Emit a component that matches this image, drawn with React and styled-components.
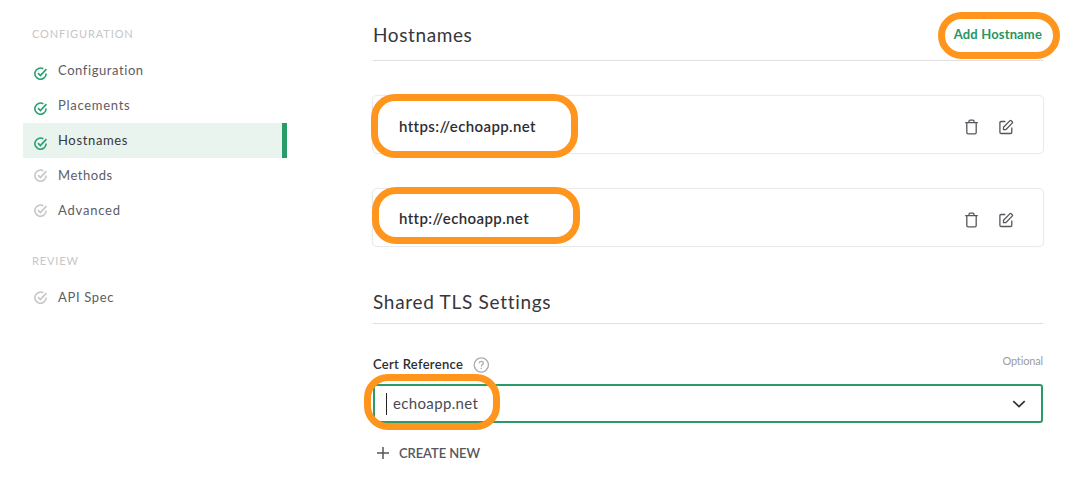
import React from "react";
import styled, { createGlobalStyle } from "styled-components";

const GlobalStyle = createGlobalStyle`
  *, *::before, *::after { box-sizing: border-box; }
  body { margin: 0; background: #fff; font-family: Lato, "Liberation Sans", sans-serif; font-variant-ligatures: none; color: #2c2c33; }
  h2, p, ul { margin: 0; padding: 0; font-weight: 400; }
  button { border: 0; padding: 0; background: none; font-family: inherit; }
`;

const Page = styled.div`
  display: flex;
  width: 1076px;
  height: 493px;
  overflow: hidden;
`;

const Sidebar = styled.nav`
  width: 264px;
  margin-left: 23px;
  padding-top: 27px;
`;

const GroupTitle = styled.p`
  height: 14px;
  margin: ${(p) => p.$margin};
  padding-left: 9px;
  font-size: 11px;
  line-height: 14px;
  letter-spacing: 0.88px;
  color: #c6c6c9;
`;

const NavItem = styled.div`
  display: flex;
  align-items: center;
  height: 35px;
  padding-left: 11px;
  border-right: 5px solid ${(p) => (p.$active ? "#289d68" : "transparent")};
  background: ${(p) => (p.$active ? "#e9f4ee" : "transparent")};
  color: ${(p) => (p.$active ? "#36363d" : "#5d5d64")};
  font-size: 13px;
  line-height: 16px;
  letter-spacing: ${(p) => p.$spacing || 0.65}px;

  svg {
    margin-right: 11px;
    margin-top: ${(p) => (p.$done ? 7 : 0)}px;
    color: ${(p) => (p.$done ? "#279f70" : "#c6c6c8")};
  }
`;

const NavLabel = styled.span`
  padding-bottom: 2px;
`;

const Main = styled.main`
  display: flex;
  flex-direction: column;
  width: 670px;
  margin-left: 86px;
`;

const SectionHeader = styled.header`
  display: flex;
  justify-content: space-between;
  align-items: center;
  height: ${(p) => p.$height}px;
  padding-top: ${(p) => p.$top}px;
  border-bottom: 1px solid #dfdfe1;
`;

const Heading = styled.h2`
  font-size: 19px;
  line-height: 24px;
  letter-spacing: ${(p) => p.$spacing}px;
  color: #36363c;
`;

const AddButton = styled.button`
  margin: -2px 1px 0 0;
  font-size: 13px;
  line-height: 18px;
  font-weight: 700;
  letter-spacing: 0.15px;
  color: #289563;
`;

const Cards = styled.div`
  display: flex;
  flex-direction: column;
  gap: 34px;
  margin: 34px -1px 0;
`;

const Card = styled.div`
  display: flex;
  align-items: center;
  height: 59px;
  padding: 4px 29px 0 26px;
  border: 1px solid #e9eaec;
  border-radius: 5px;
  box-shadow: 0 0 2px rgba(60, 60, 80, 0.06);
`;

const Host = styled.span`
  flex: 1;
  padding-bottom: ${(p) => p.$lift}px;
  font-size: 15px;
  line-height: 20px;
  font-weight: 600;
  letter-spacing: 0.38px;
  color: #2d2d33;
`;

const Actions = styled.div`
  display: flex;
  gap: 19px;
  color: #56565d;
  svg { display: block; }
`;

const FieldLabel = styled.div`
  display: flex;
  align-items: center;
  height: 18px;
  margin-top: 32px;
`;

const LabelText = styled.span`
  padding-bottom: 2px;
  font-size: 13px;
  font-weight: 600;
  letter-spacing: 0.3px;
  color: #2d2d33;
`;

const HelpIcon = styled.svg`
  margin-left: 10px;
`;

const Optional = styled.span`
  margin: -9px 0 0 auto;
  font-size: 11px;
  letter-spacing: -0.15px;
  color: #9c9ca1;
`;

const SelectBox = styled.div`
  display: flex;
  align-items: center;
  height: 39px;
  margin-top: 10px;
  padding: 0 15px 0 11px;
  border: 2px solid #2b9c68;
  border-radius: 3px;
  color: #4a4a51;
`;

const SelectValue = styled.span`
  padding-bottom: 2px;
  font-size: 15px;
  letter-spacing: 0.35px;
`;

const Caret = styled.i`
  width: 1px;
  height: 22px;
  margin-right: 6px;
  background: #222;
`;

const Chevron = styled.svg`
  margin-left: auto;
`;

const CreateButton = styled.button`
  display: flex;
  align-items: center;
  gap: 10px;
  height: 18px;
  margin: 21px 0 0 4px;
  font-size: 13px;
  font-weight: 600;
  letter-spacing: -0.1px;
  color: #56565c;
`;

/* Orange marker drawn over the content it highlights. */
const Marker = styled.div`
  position: absolute;
  left: ${(p) => p.$x}px;
  top: ${(p) => p.$y}px;
  width: ${(p) => p.$w}px;
  height: ${(p) => p.$h}px;
  border: 7px solid #ff951d;
  border-radius: 24px;
  pointer-events: none;
`;

const CheckIcon = () => (
  <svg width="13" height="14" viewBox="0 0 13 14" fill="none" stroke="currentColor" strokeWidth="1.6">
    <path d="M9.3 1.8A5.6 5.6 0 1 0 12.1 6.6" />
    <path d="M4 6.1 6.4 8.6 12.4 2.1" />
  </svg>
);

const TrashIcon = () => (
  <svg width="15" height="16" viewBox="0 0 15 16" fill="none" stroke="currentColor" strokeWidth="1.3">
    <path d="M1.2 3.7h12.6M5 3.5V2.2Q5 1.2 6 1.2h3q1 0 1 1v1.3M2.8 3.9v9.6q0 1.3 1.3 1.3h6.8q1.3 0 1.3-1.3V3.9" />
  </svg>
);

const EditIcon = () => (
  <svg width="16" height="16" viewBox="0 0 16 16" fill="none" stroke="currentColor" strokeWidth="1.3" strokeLinejoin="round">
    <path d="M7.3 2.5H3.2Q1.9 2.5 1.9 3.8v9.4q0 1.3 1.3 1.3h9.3q1.3 0 1.3-1.3V8.6" />
    <path d="M5.5 10.7V8.2L12 1.6q.5-.5 1 0l1.4 1.3q.5.5 0 1L8 10.5Z" />
  </svg>
);

const NAV = [
  { label: "Configuration", done: true, spacing: 0.58 },
  { label: "Placements", done: true, spacing: 0.72 },
  { label: "Hostnames", done: true, active: true },
  { label: "Methods", spacing: 0.55 },
  { label: "Advanced", spacing: 0.8 },
];

const HOSTS = [
  { url: "https://echoapp.net", lift: 2 },
  { url: "http://echoapp.net", lift: 4 },
];

const MARKERS = [
  [938, 11.5, 122, 47],
  [370.5, 94.3, 207, 64],
  [371.6, 187.3, 208.4, 57],
  [363.6, 374.3, 136.9, 55.3],
];

export default function App() {
  return (
    <>
      <GlobalStyle />
      <Page>
        <Sidebar>
          <GroupTitle $margin="0 0 12px">CONFIGURATION</GroupTitle>
          {NAV.map((n) => (
            <NavItem key={n.label} $done={n.done} $active={n.active} $spacing={n.spacing}>
              <CheckIcon />
              <NavLabel>{n.label}</NavLabel>
            </NavItem>
          ))}
          <GroupTitle $margin="26px 0 12px">REVIEW</GroupTitle>
          <NavItem>
            <CheckIcon />
            <NavLabel>API Spec</NavLabel>
          </NavItem>
        </Sidebar>
        <Main>
          <SectionHeader $height={61} $top={10}>
            <Heading $spacing={0.6}>Hostnames</Heading>
            <AddButton>Add Hostname</AddButton>
          </SectionHeader>
          <Cards>
            {HOSTS.map((h) => (
              <Card key={h.url}>
                <Host $lift={h.lift}>{h.url}</Host>
                <Actions>
                  <TrashIcon />
                  <EditIcon />
                </Actions>
              </Card>
            ))}
          </Cards>
          <SectionHeader $height={77} $top={33}>
            <Heading $spacing={0.7}>Shared TLS Settings</Heading>
          </SectionHeader>
          <FieldLabel>
            <LabelText>Cert Reference</LabelText>
            <HelpIcon width="16" height="16" viewBox="0 0 16 16" fill="none" stroke="#aaaab1" strokeWidth="1.3">
              <circle cx="8.3" cy="8" r="7.1" />
              <path d="M6.2 6.3Q6.3 4.3 8.3 4.3t2.1 1.8Q10.4 7 9.3 7.7 8.3 8.3 8.3 9.5M8.3 10.7v1.3" />
            </HelpIcon>
            <Optional>Optional</Optional>
          </FieldLabel>
          <SelectBox>
            <Caret />
            <SelectValue>echoapp.net</SelectValue>
            <Chevron width="14" height="8" viewBox="0 0 14 8" fill="none" stroke="#2e2e34" strokeWidth="1.7">
              <path d="M1.3 1.2 7 6.5l5.7-5.3" />
            </Chevron>
          </SelectBox>
          <CreateButton>
            <svg width="12" height="12" viewBox="0 0 12 12" stroke="currentColor" strokeWidth="1.5">
              <path d="M0 6h12M6 0v12" />
            </svg>
            CREATE NEW
          </CreateButton>
        </Main>
      </Page>
      {MARKERS.map(([x, y, w, h]) => (
        <Marker key={y} $x={x} $y={y} $w={w} $h={h} />
      ))}
    </>
  );
}
